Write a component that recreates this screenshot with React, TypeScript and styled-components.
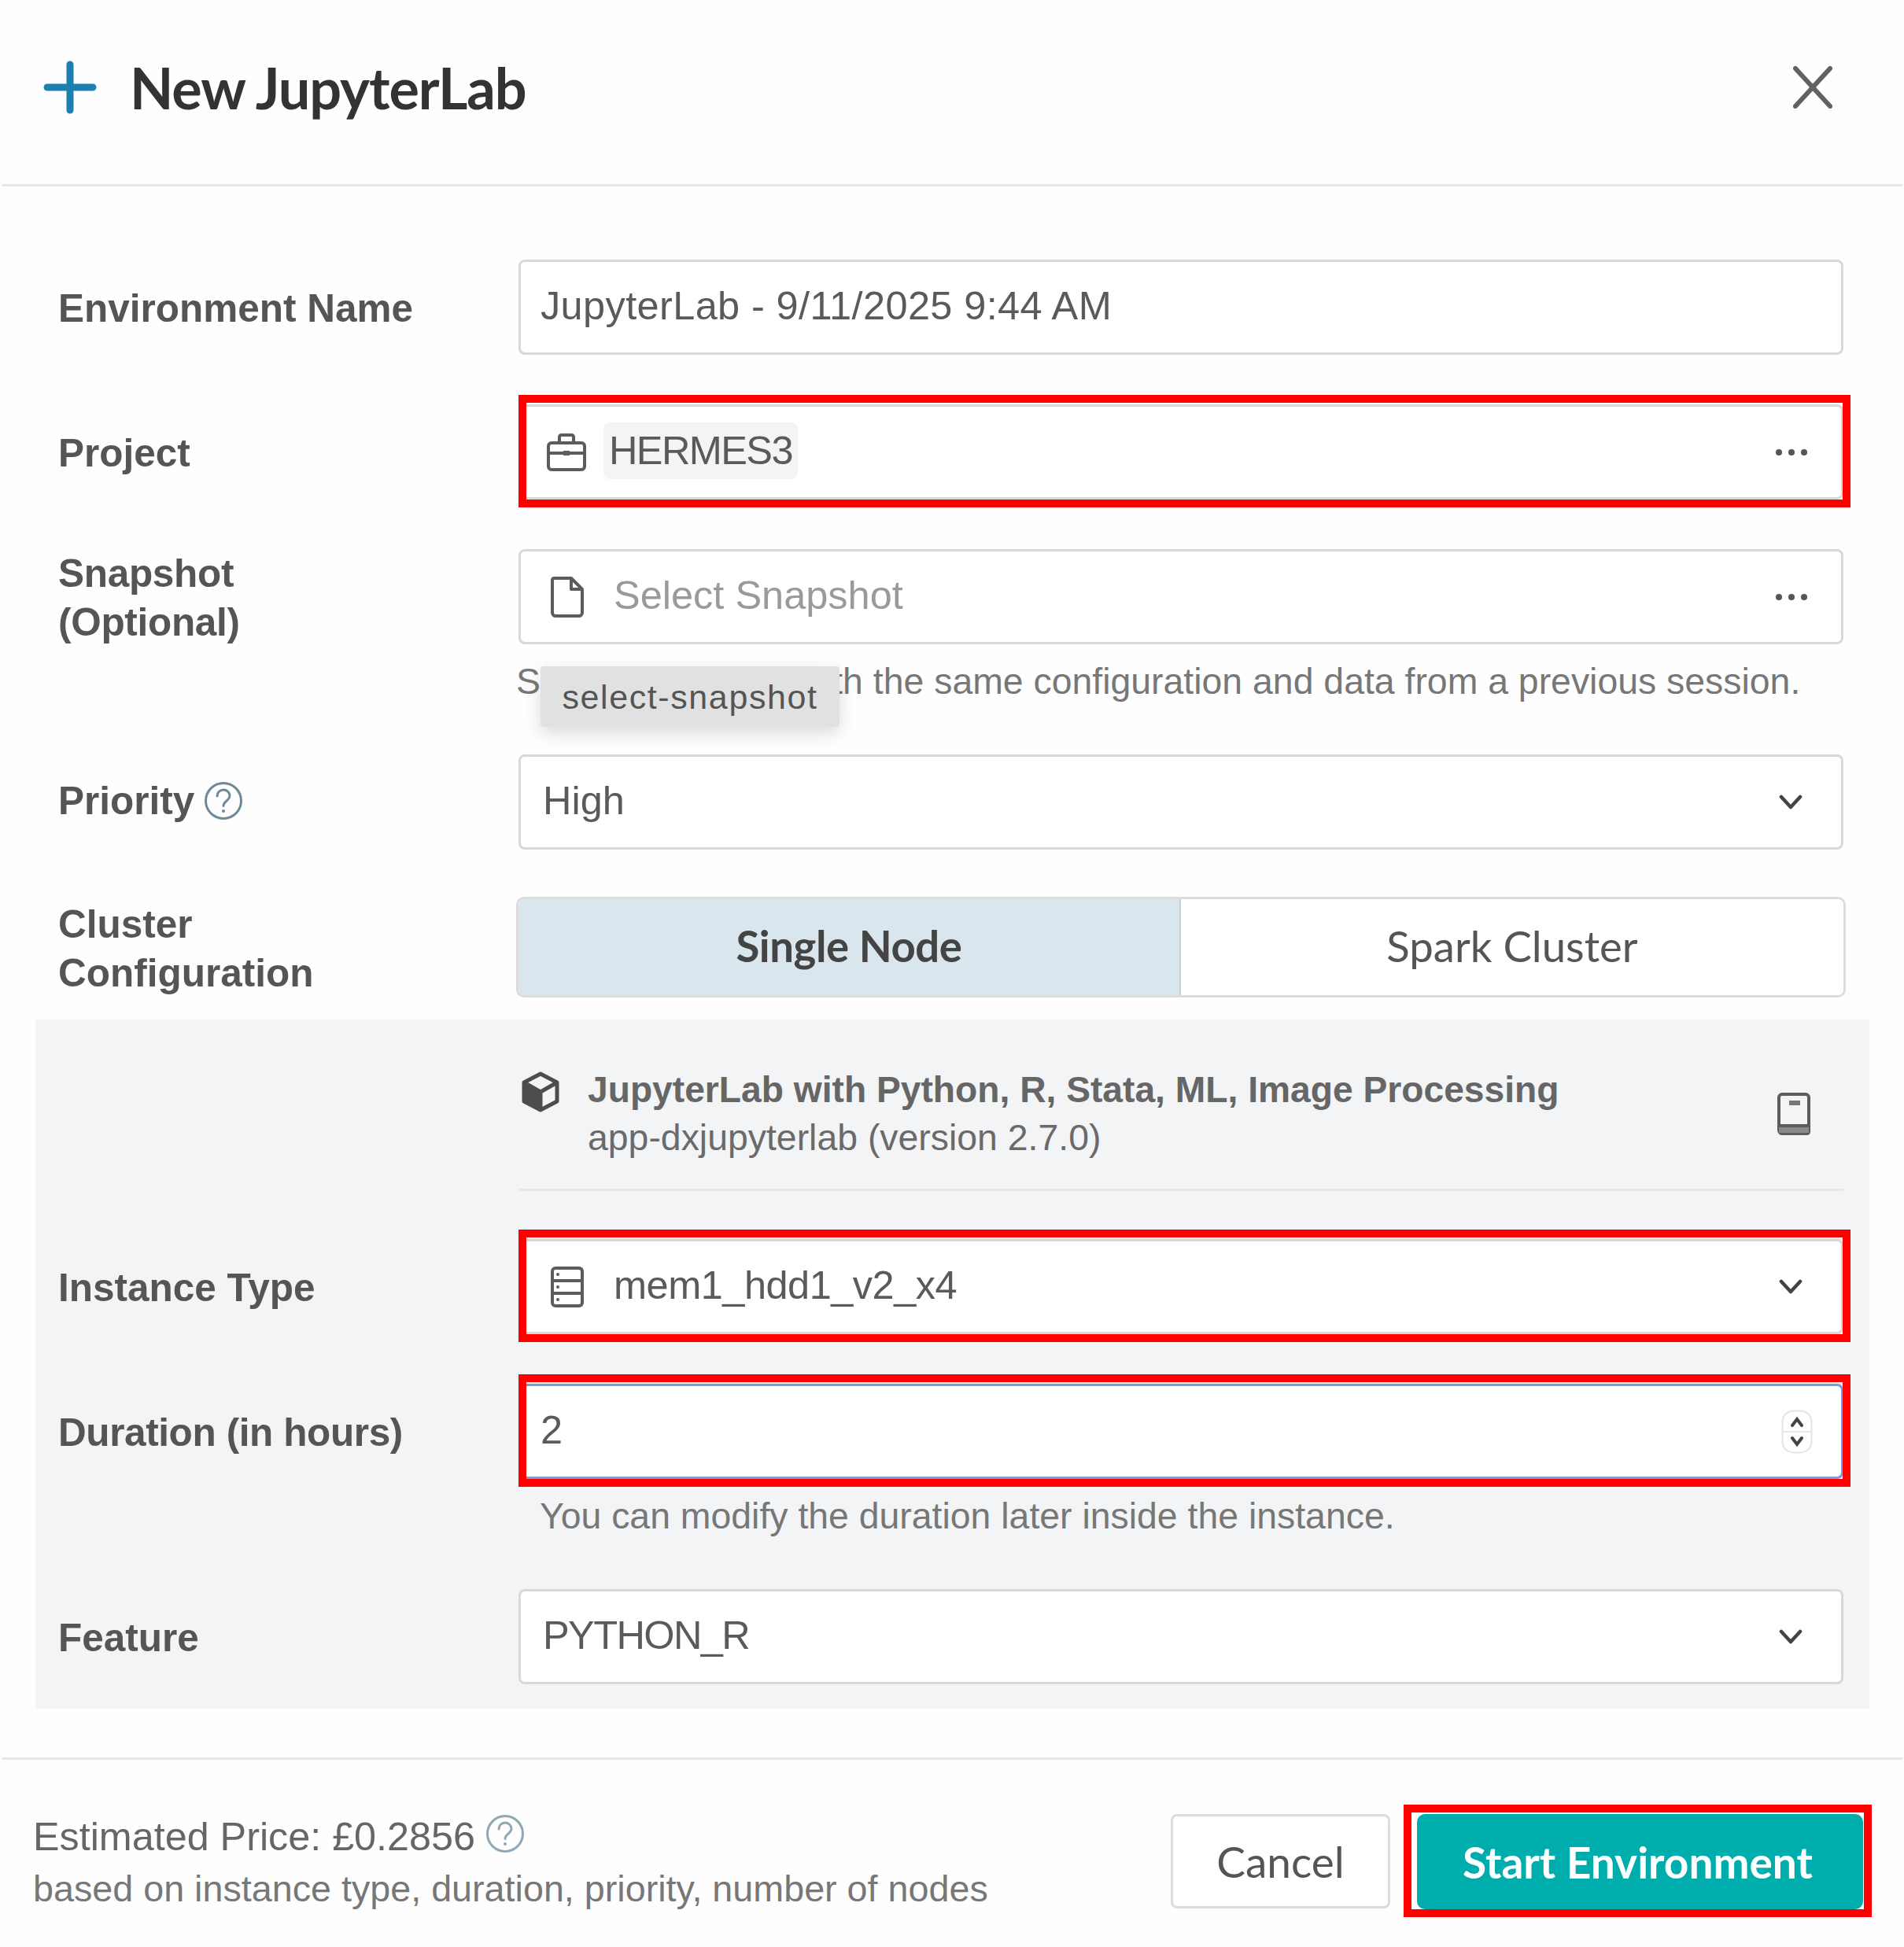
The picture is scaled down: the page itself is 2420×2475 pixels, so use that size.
import styled, { createGlobalStyle } from "styled-components";

const GlobalStyle = createGlobalStyle`
  body {
    margin: 0;
    background: #fefefe;
    font-family: "Liberation Sans", Arial, sans-serif;
    color: #555;
  }
`;

const ICON = "#5c5c5c";

const PlusIcon = () => (
  <PlusSvg viewBox="0 0 68 68">
    <path d="M34 5V63M5 34H63" stroke="#1b80b0" strokeWidth="9" strokeLinecap="round" />
  </PlusSvg>
);

const CloseIcon = () => (
  <CloseSvg viewBox="0 0 50 54">
    <path d="M3 3L47 51M47 3L3 51" stroke="#616161" strokeWidth="6" strokeLinecap="round" />
  </CloseSvg>
);

const HelpIcon = ({ faint }: { faint?: boolean }) => (
  <HelpSvg viewBox="0 0 50 50">
    <circle cx="25" cy="25" r="22.5" fill="none" stroke={faint ? "#8fa8b4" : "#6d8a98"} strokeWidth="3" />
    <path
      d="M17 19c0-5 4-8 8-8s8 3 8 7.5c0 6-8 7-8 13"
      fill="none"
      stroke={faint ? "#8fa8b4" : "#6d8a98"}
      strokeWidth="3"
      strokeLinecap="round"
    />
    <circle cx="25" cy="38" r="2" fill={faint ? "#8fa8b4" : "#6d8a98"} />
  </HelpSvg>
);

const BriefcaseIcon = () => (
  <FieldSvg viewBox="0 0 50 48">
    <g fill="none" stroke={ICON} strokeWidth="4">
      <rect x="2" y="12" width="46" height="34" rx="4" />
      <path d="M16 12V5c0-2 1-3 3-3h12c2 0 3 1 3 3v7M2 25H48" />
    </g>
    <rect x="21" y="22" width="8" height="6" fill={ICON} />
  </FieldSvg>
);

const FileIcon = () => (
  <FieldSvg viewBox="0 0 42 52">
    <path
      d="M4 2H26L40 16V46c0 2-2 4-4 4H6c-2 0-4-2-4-4V4c0-1 1-2 2-2ZM26 2V16H40"
      fill="none"
      stroke={ICON}
      strokeWidth="4"
      strokeLinejoin="round"
    />
  </FieldSvg>
);

const ServerIcon = () => (
  <FieldSvg viewBox="0 0 42 52">
    <g fill="none" stroke={ICON} strokeWidth="4">
      <rect x="2" y="2" width="38" height="48" rx="4" />
      <path d="M2 18H40M2 34H40" />
    </g>
    <circle cx="9" cy="10" r="2" fill={ICON} />
    <circle cx="9" cy="26" r="2" fill={ICON} />
    <circle cx="9" cy="42" r="2" fill={ICON} />
  </FieldSvg>
);

const CubeIcon = () => (
  <CubeSvg viewBox="0 0 50 52">
    <path d="M4 14L25 26V49L4 38Z" fill="#4d4d4d" />
    <path
      d="M25 3L46 14V38L25 49L4 38V14ZM4 14L25 26L46 14M25 26V49"
      fill="none"
      stroke="#4d4d4d"
      strokeWidth="5"
      strokeLinejoin="round"
    />
  </CubeSvg>
);

const BookIcon = () => (
  <BookSvg viewBox="0 0 42 54">
    <path
      d="M6 2H36c2 0 4 2 4 4V50c0 1-1 2-2 2H6c-2 0-4-2-4-4V6c0-2 2-4 4-4ZM2 42H40"
      fill="none"
      stroke={ICON}
      strokeWidth="4"
    />
    <rect x="2" y="44" width="38" height="7" fill="#8a8a8a" />
    <rect x="15" y="10" width="14" height="6" fill="#777" />
  </BookSvg>
);

const Chevron = () => (
  <ChevronSvg viewBox="0 0 30 19">
    <path d="M3 3L15 16L27 3" fill="none" stroke="#444" strokeWidth="4.5" strokeLinecap="round" strokeLinejoin="round" />
  </ChevronSvg>
);

const Dots = () => (
  <DotsSvg viewBox="0 0 40 8">
    <circle cx="4" cy="4" r="4" fill="#555" />
    <circle cx="20" cy="4" r="4" fill="#555" />
    <circle cx="36" cy="4" r="4" fill="#555" />
  </DotsSvg>
);

const Spinner = () => (
  <SpinnerSvg viewBox="0 0 40 56">
    <rect x="1.5" y="1.5" width="37" height="53" rx="14" fill="#fff" stroke="#e4e4e4" strokeWidth="2" />
    <path d="M2 28H38" stroke="#e8e8e8" strokeWidth="2" />
    <path d="M14 20L20 12L26 20M14 36L20 44L26 36" fill="none" stroke="#444" strokeWidth="4" strokeLinecap="round" />
  </SpinnerSvg>
);

export default function App() {
  return (
    <>
      <GlobalStyle />
      <Page>
        <Header>
          <HeaderLeft>
            <PlusIcon />
            <Title>New JupyterLab</Title>
          </HeaderLeft>
          <CloseIcon />
        </Header>

        <Form>
          <Row>
            <Label>Environment Name</Label>
            <Control>
              <Field>
                <Value $track={0.37} $flush>JupyterLab - 9/11/2025 9:44 AM</Value>
              </Field>
            </Control>
          </Row>

          <Row>
            <Label>Project</Label>
            <Control>
              <Field $marked>
                <IconSlot $wide>
                  <BriefcaseIcon />
                </IconSlot>
                <Chip>HERMES3</Chip>
                <FieldEnd>
                  <Dots />
                </FieldEnd>
              </Field>
            </Control>
          </Row>

          <Row>
            <Label $track={-0.3}>
              Snapshot
              <br />
              (Optional)
            </Label>
            <Control>
              <Field>
                <IconSlot>
                  <FileIcon />
                </IconSlot>
                <Value $muted>Select Snapshot</Value>
                <FieldEnd>
                  <Dots />
                </FieldEnd>
              </Field>
              <Help>
                Start the session with the same configuration and data from a previous session.
                <Tooltip>select-snapshot</Tooltip>
              </Help>
            </Control>
          </Row>

          <Row $after={60}>
            <Label $lift>
              Priority
              <HelpSlot>
                <HelpIcon />
              </HelpSlot>
            </Label>
            <Control>
              <Field>
                <Value>High</Value>
                <FieldEnd>
                  <Chevron />
                </FieldEnd>
              </Field>
            </Control>
          </Row>

          <Row $after={28}>
            <Label $tall>
              Cluster
              <br />
              Configuration
            </Label>
            <Control>
              <Segmented>
                <Segment $active>Single Node</Segment>
                <Segment>Spark Cluster</Segment>
              </Segmented>
            </Control>
          </Row>
        </Form>

        <Panel>
          <AppInfo>
            <CubeSlot>
              <CubeIcon />
            </CubeSlot>
            <AppText>
              <AppName>JupyterLab with Python, R, Stata, ML, Image Processing</AppName>
              <AppVersion>app-dxjupyterlab (version 2.7.0)</AppVersion>
            </AppText>
            <BookIcon />
          </AppInfo>

          <Row>
            <Label>Instance Type</Label>
            <Control>
              <Field $marked>
                <IconSlot>
                  <ServerIcon />
                </IconSlot>
                <Value $track={-0.5}>mem1_hdd1_v2_x4</Value>
                <FieldEnd>
                  <Chevron />
                </FieldEnd>
              </Field>
            </Control>
          </Row>

          <Row>
            <Label $track={-0.4}>Duration (in hours)</Label>
            <Control>
              <Field $marked $focused>
                <Value $flush>2</Value>
                <SpinnerEnd>
                  <Spinner />
                </SpinnerEnd>
              </Field>
              <Help $inset>You can modify the duration later inside the instance.</Help>
            </Control>
          </Row>

          <Row $after={0}>
            <Label>Feature</Label>
            <Control>
              <Field>
                <Value $track={-1.6}>PYTHON_R</Value>
                <FieldEnd>
                  <Chevron />
                </FieldEnd>
              </Field>
            </Control>
          </Row>
        </Panel>

        <Footer>
          <Price>
            <PriceLine>
              Estimated Price: £0.2856
              <PriceHelp>
                <HelpIcon faint />
              </PriceHelp>
            </PriceLine>
            <PriceNote>based on instance type, duration, priority, number of nodes</PriceNote>
          </Price>
          <Actions>
            <CancelButton>Cancel</CancelButton>
            <StartButton>Start Environment</StartButton>
          </Actions>
        </Footer>
      </Page>
    </>
  );
}

const Page = styled.div`
  width: 2420px;
  height: 2475px;
  overflow: hidden;
`;

const Header = styled.header`
  height: 237px;
  margin: 0 2px;
  padding: 0 89px 12px 53px;
  box-sizing: border-box;
  border-bottom: 3px solid #e8e8e8;
  display: flex;
  align-items: center;
  justify-content: space-between;
`;

const HeaderLeft = styled.div`
  display: flex;
  align-items: center;
  gap: 42px;
`;

const PlusSvg = styled.svg`
  width: 68px;
  height: 68px;
`;

const CloseSvg = styled.svg`
  width: 50px;
  height: 54px;
`;

const Title = styled.h1`
  margin: 0;
  font-family: Lato, sans-serif;
  font-size: 72px;
  font-weight: 700;
  letter-spacing: -1.05px;
  color: #333;
`;

const Form = styled.div`
  padding: 93px 77px 0 74px;
`;

const Row = styled.div<{ $after?: number }>`
  display: grid;
  grid-template-columns: 585px 1fr;
  margin-bottom: ${(p) => p.$after ?? 63}px;
`;

const Label = styled.div<{ $tall?: boolean; $lift?: boolean; $track?: number }>`
  height: ${(p) => (p.$tall ? 128 : 121)}px;
  padding: ${(p) => (p.$lift ? "0 0 3px" : "3px 0 0")};
  box-sizing: border-box;
  font-size: 49.5px;
  font-weight: 700;
  line-height: 62px;
  letter-spacing: ${(p) => p.$track ?? 0}px;
  color: #555;
  display: flex;
  flex-wrap: wrap;
  align-content: center;
  align-items: center;
`;

const HelpSlot = styled.span`
  display: inline-flex;
  margin-left: 12px;
`;

const HelpSvg = styled.svg`
  width: 50px;
  height: 50px;
`;

const Control = styled.div`
  min-width: 0;
`;

const Field = styled.div<{ $marked?: boolean; $focused?: boolean }>`
  position: relative;
  height: 121px;
  box-sizing: border-box;
  padding: 0 28px 0 28px;
  display: flex;
  align-items: center;
  background: #fff;
  border: 3px solid ${(p) => (p.$focused ? "#6f9fe0" : "#d8d8d8")};
  border-radius: 8px;

  ${(p) =>
    p.$marked &&
    `
    &::after {
      content: "";
      position: absolute;
      top: -15px;
      left: -3px;
      right: -12px;
      bottom: -13px;
      border: 10px solid #fe0000;
      pointer-events: none;
    }
  `}
`;

const Value = styled.span<{ $muted?: boolean; $track?: number; $flush?: boolean }>`
  margin: 0 0 4px ${(p) => (p.$flush ? -3 : 0)}px;
  font-size: 50.5px;
  letter-spacing: ${(p) => p.$track ?? 0}px;
  color: ${(p) => (p.$muted ? "#9a9a9a" : "#5a5a5a")};
`;

const IconSlot = styled.span<{ $wide?: boolean }>`
  width: ${(p) => (p.$wide ? 50 : 42)}px;
  margin-left: ${(p) => (p.$wide ? 5 : 10)}px;
  margin-right: ${(p) => (p.$wide ? 22 : 38)}px;
  display: flex;
`;

const FieldSvg = styled.svg`
  width: 100%;
  display: block;
`;

const Chip = styled.span`
  padding: 0 7px;
  height: 72px;
  margin-bottom: 4px;
  display: flex;
  align-items: center;
  border-radius: 8px;
  background: #f3f4f6;
  font-size: 50.5px;
  letter-spacing: -1.6px;
  color: #5a5a5a;
`;

const FieldEnd = styled.span`
  margin-left: auto;
  margin-right: 15px;
  display: flex;
  align-items: center;
`;

const SpinnerEnd = styled.span`
  margin-left: auto;
  display: flex;
  margin-right: 8px;
`;

const DotsSvg = styled.svg`
  width: 40px;
  height: 8px;
`;

const ChevronSvg = styled.svg`
  width: 30px;
  height: 19px;
  margin-right: 6px;
`;

const SpinnerSvg = styled.svg`
  width: 40px;
  height: 56px;
`;

const Help = styled.div<{ $inset?: boolean }>`
  position: relative;
  height: 77px;
  box-sizing: border-box;
  padding: 17px 0 0 ${(p) => (p.$inset ? 27 : 0)}px;
  margin-left: ${(p) => (p.$inset ? 0 : -3)}px;
  line-height: 60px;
  font-size: 46.4px;
  color: #777;
  white-space: nowrap;
`;

const Tooltip = styled.span`
  position: absolute;
  top: 28px;
  left: 31px;
  width: 380px;
  height: 77px;
  display: flex;
  align-items: center;
  justify-content: center;
  background: #e1e1e1;
  border-radius: 4px;
  box-shadow: 0 8px 22px rgba(0, 0, 0, 0.14);
  font-size: 43px;
  letter-spacing: 1.6px;
  color: #555;
`;

const Segmented = styled.div`
  margin: 0 -3px 0 -3px;
  height: 128px;
  box-sizing: border-box;
  display: grid;
  grid-template-columns: 1fr 1fr;
  border: 3px solid #dcdcdc;
  border-radius: 10px;
  overflow: hidden;
`;

const Segment = styled.div<{ $active?: boolean }>`
  padding-bottom: 4px;
  display: flex;
  align-items: center;
  justify-content: center;
  font-family: Lato, sans-serif;
  font-size: 54.5px;
  font-weight: ${(p) => (p.$active ? 700 : 400)};
  letter-spacing: ${(p) => (p.$active ? -0.4 : 0)}px;
  color: ${(p) => (p.$active ? "#444" : "#555")};
  background: ${(p) => (p.$active ? "#dae6ee" : "#fff")};
  border-right: ${(p) => (p.$active ? "2px solid #c9cfd3" : "none")};
`;

const Panel = styled.section`
  margin: 0 44px 0 45px;
  padding: 59px 33px 31px 29px;
  background: #f3f4f6;
`;

const AppInfo = styled.div`
  margin: 0 0 61px 585px;
  padding: 0 42px 34px 0;
  border-bottom: 3px solid #e6e7e8;
  display: flex;
  align-items: center;
`;

const CubeSlot = styled.span`
  align-self: flex-start;
  display: flex;
  width: 88px;
  padding-left: 3px;
  box-sizing: border-box;
  margin-top: 7px;
`;

const CubeSvg = styled.svg`
  width: 50px;
  height: 52px;
`;

const AppText = styled.div`
  flex: 1;
  line-height: 61px;
`;

const AppName = styled.div`
  font-size: 46.2px;
  font-weight: 700;
  color: #666;
`;

const AppVersion = styled.div`
  font-size: 46.4px;
  color: #6a6a6a;
`;

const BookSvg = styled.svg`
  width: 42px;
  height: 54px;
`;

const Footer = styled.footer`
  margin: 62px 2px 0;
  padding: 69px 50px 0 40px;
  border-top: 3px solid #e8e8e8;
  display: flex;
  justify-content: space-between;
  align-items: flex-start;
`;

const Price = styled.div`
  margin-top: -4px;
  line-height: 66px;
`;

const PriceLine = styled.div`
  display: flex;
  align-items: center;
  font-size: 50.3px;
  color: #666;
`;

const PriceHelp = styled.span`
  display: inline-flex;
  margin: -8px 0 0 13px;
`;

const PriceNote = styled.div`
  font-size: 46.7px;
  color: #777;
`;

const Actions = styled.div`
  display: flex;
  gap: 34px;
`;

const CancelButton = styled.button`
  width: 279px;
  height: 120px;
  padding: 0;
  background: #fff;
  border: 3px solid #dcdcdc;
  border-radius: 8px;
  font-family: Lato, sans-serif;
  font-size: 55px;
  color: #555;
`;

const StartButton = styled.button`
  position: relative;
  width: 567px;
  height: 121px;
  padding: 0 6px 0 0;
  border: none;
  border-radius: 10px;
  background: #00adad;
  font-family: Lato, sans-serif;
  font-size: 55px;
  font-weight: 700;
  color: #fff;

  &::after {
    content: "";
    position: absolute;
    top: -12px;
    left: -17px;
    right: -11px;
    bottom: -10px;
    border: 10px solid #fe0000;
  }
`;
